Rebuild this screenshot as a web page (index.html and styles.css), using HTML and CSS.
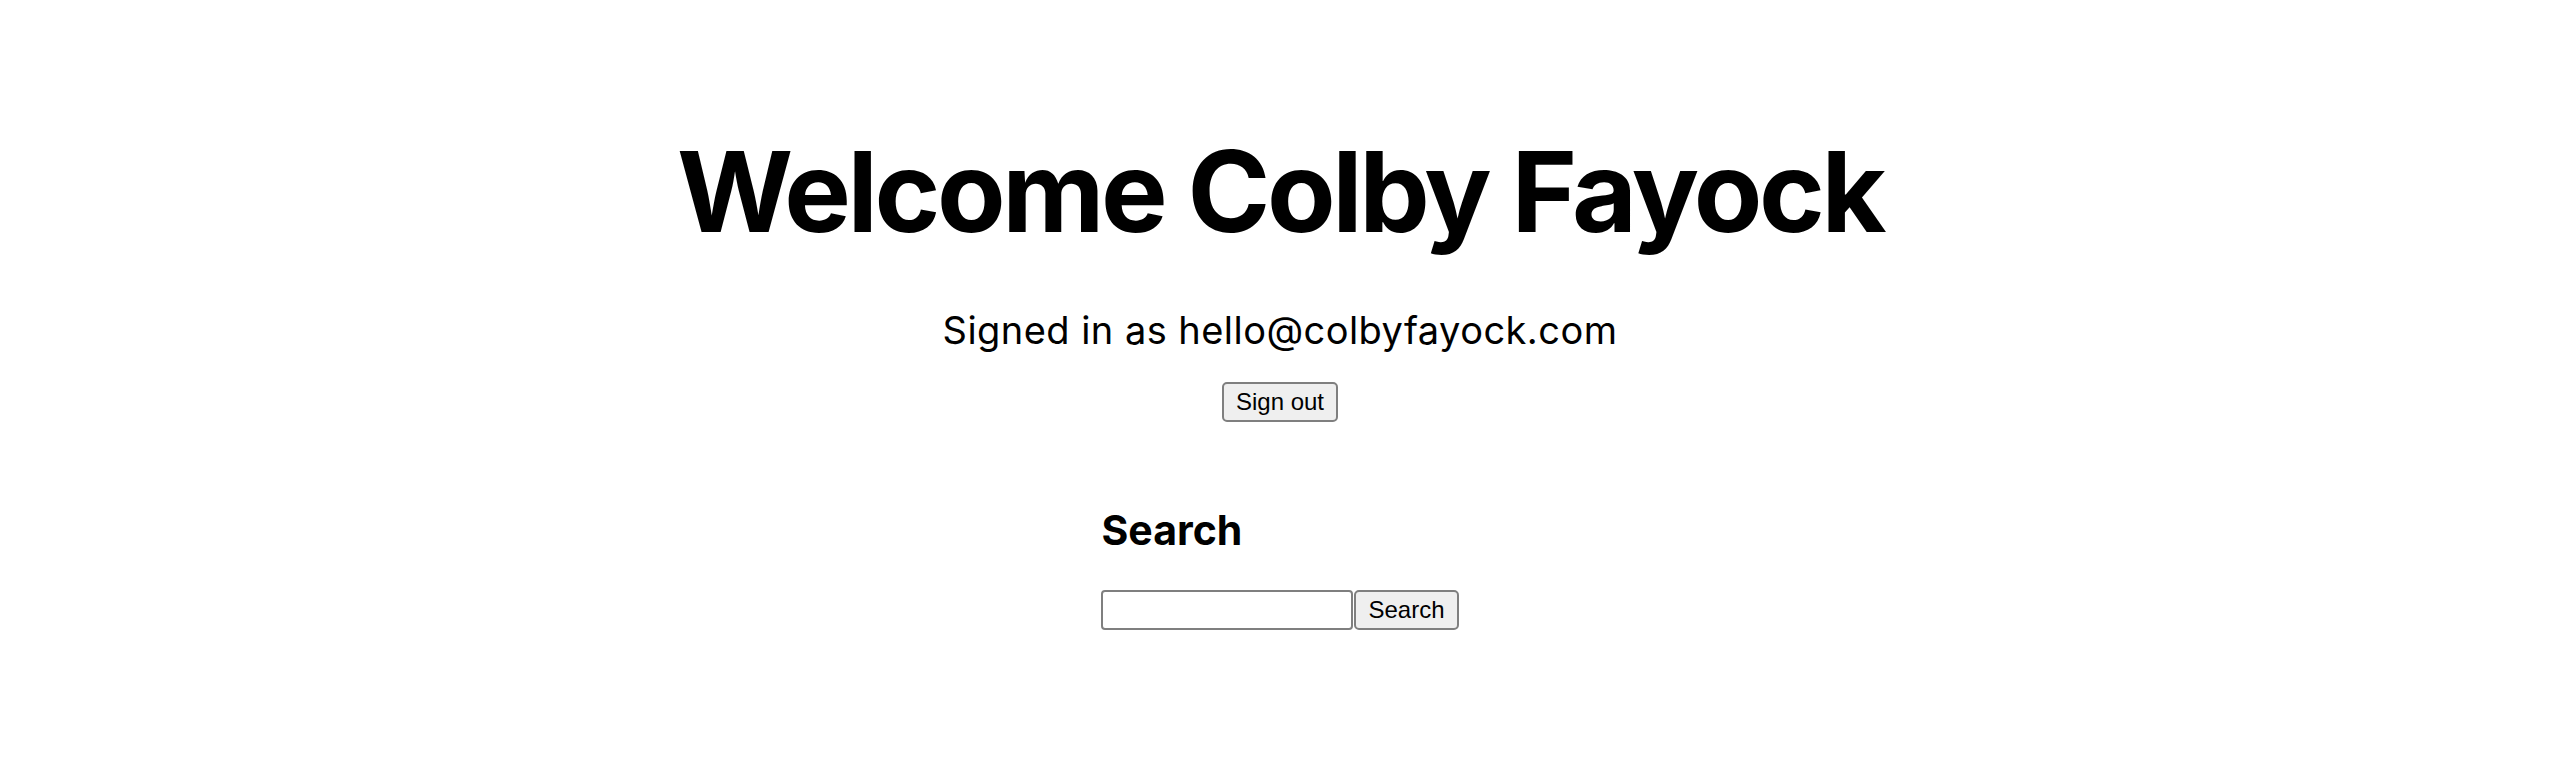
FILE: index.html
```html
<!DOCTYPE html>
<html lang="en">
<head>
<meta charset="utf-8">
<title>Welcome Colby Fayock</title>
<link rel="stylesheet" href="styles.css">
</head>
<body>
<main class="page">
  <h1 class="title">Welcome Colby Fayock</h1>
  <p class="signed-in">Signed in as hello@colbyfayock.com</p>
  <button class="btn" type="button">Sign out</button>
  <section class="search">
    <h2 class="search-title">Search</h2>
    <form class="search-form">
      <input class="search-input" type="text" name="query">
      <button class="btn" type="submit">Search</button>
    </form>
  </section>
</main>
</body>
</html>
```
FILE: styles.css
```css
html, body {
  margin: 0;
  padding: 0;
  background: #ffffff;
}

body {
  font-family: Inter, "Noto Sans", sans-serif;
  color: #000000;
}

.page {
  display: flex;
  flex-direction: column;
  align-items: center;
  padding-top: 124px;
}

.title {
  margin: 0;
  font-size: 112px;
  font-weight: 700;
  line-height: 134px;
  letter-spacing: -3.4px;
}

.signed-in {
  margin: 50px 0 0;
  font-size: 38px;
  font-weight: 400;
  line-height: 44px;
  letter-spacing: 0.45px;
}

.btn {
  box-sizing: border-box;
  height: 40px;
  margin: 0;
  padding: 0 12px;
  font-family: "Liberation Sans", Arial, sans-serif;
  font-size: 24px;
  line-height: 36px;
  color: #000000;
  background: #efefef;
  border: 2px solid #7f7f7f;
  border-radius: 5px;
}

.signed-in + .btn {
  margin-top: 30px;
}

.search {
  margin-top: 83px;
  text-align: left;
}

.search-title {
  margin: 0;
  font-size: 41px;
  font-weight: 700;
  line-height: 50px;
}

.search-form {
  display: flex;
  gap: 1px;
  margin-top: 35px;
}

.search-input {
  box-sizing: border-box;
  width: 252px;
  height: 40px;
  margin: 0;
  padding: 2px 4px;
  font-family: "Liberation Sans", Arial, sans-serif;
  font-size: 24px;
  background: #ffffff;
  border: 2px solid #7f7f7f;
  border-radius: 4px;
}
```
